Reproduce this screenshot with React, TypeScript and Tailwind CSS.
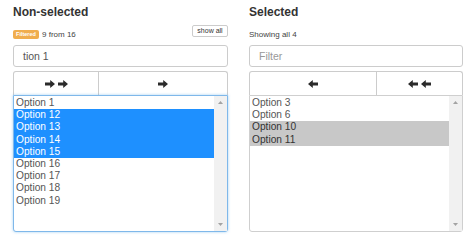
import React from "react";

const font = { fontFamily: '"Liberation Sans", Arial, Helvetica, sans-serif' };

function Arrow({ left = false }: { left?: boolean }) {
  return (
    <svg width="10" height="8" viewBox="0 0 10 8" className={left ? "-scale-x-100" : ""}>
      <path d="M0 2.6h5.2V0L10 4 5.2 8V5.4H0z" fill="#2b2b2b" />
    </svg>
  );
}

function Scrollbar() {
  return (
    <div className="w-[13px] bg-[#f1f1f1] flex flex-col justify-between items-center py-[5px]">
      <svg width="5" height="3" viewBox="0 0 5 3"><path d="M0 3L2.5 0 5 3z" fill="#a3a3a3" /></svg>
      <svg width="5" height="3" viewBox="0 0 5 3"><path d="M0 0h5L2.5 3z" fill="#a3a3a3" /></svg>
    </div>
  );
}

type Opt = { label: string; sel: boolean };

function List({ opts, focused, selBg, selText }: { opts: Opt[]; focused: boolean; selBg: string; selText: string }) {
  return (
    <div
      className={
        "h-[137px] flex rounded-b-[3px] bg-white border " +
        (focused ? "border-[#7fb8ea] shadow-[0_0_3px_rgba(102,175,233,0.6)]" : "border-[#cfcfcf]")
      }
    >
      <div className="flex-1 pt-[1px] flex flex-col">
        {opts.map((o) => (
          <div
            key={o.label}
            className={"h-[12.2px] leading-[12px] text-[10.2px] pl-[2px] " + (o.sel ? selBg + " " + selText : "text-[#555]")}
          >
            {o.label}
          </div>
        ))}
      </div>
      <Scrollbar />
    </div>
  );
}

export default function App() {
  const left: Opt[] = [
    { label: "Option 1", sel: false },
    { label: "Option 12", sel: true },
    { label: "Option 13", sel: true },
    { label: "Option 14", sel: true },
    { label: "Option 15", sel: true },
    { label: "Option 16", sel: false },
    { label: "Option 17", sel: false },
    { label: "Option 18", sel: false },
    { label: "Option 19", sel: false },
  ];
  const right: Opt[] = [
    { label: "Option 3", sel: false },
    { label: "Option 6", sel: false },
    { label: "Option 10", sel: true },
    { label: "Option 11", sel: true },
  ];
  return (
    <div style={font} className="w-[474px] h-[237px] bg-white flex gap-[21px] pl-[13px] pt-[5px] text-[#333]">
      <div className="w-[215px] flex flex-col">
        <div className="text-[12px] font-bold leading-[14px]">Non-selected</div>
        <div className="mt-[5px] h-[14px] flex justify-between items-start">
          <div className="flex items-center mt-[6px] gap-[3px]">
            <span className="bg-[#f0ad4e] text-white text-[5.5px] font-bold h-[9px] w-[26px] leading-[9px] rounded-[2px] text-center">
              Filtered
            </span>
            <span className="text-[8px] leading-[9px] text-[#444]">9 from 16</span>
          </div>
          <div className="mt-[1px] h-[12px] w-[36px] border border-[#ccc] rounded-[2px] text-[7px] leading-[10px] text-center text-[#333]">
            show all
          </div>
        </div>
        <div className="mt-[7px] h-[22px] border border-[#ccc] rounded-[3px] pl-[9px] text-[10.5px] leading-[20px] text-[#555]">
          tion 1
        </div>
        <div className="mt-[4px] h-[24px] flex border border-b-0 border-[#ccc] rounded-t-[3px]">
          <div className="w-[40%] flex items-center justify-center gap-[3px] border-r border-[#ccc]">
            <Arrow />
            <Arrow />
          </div>
          <div className="flex-1 flex items-center justify-center">
            <Arrow />
          </div>
        </div>
        <List opts={left} focused selBg="bg-[#1e90ff]" selText="text-white" />
      </div>
      <div className="w-[214px] flex flex-col">
        <div className="text-[12px] font-bold leading-[14px]">Selected</div>
        <div className="mt-[5px] h-[14px] flex items-start">
          <span className="mt-[6px] text-[8px] leading-[9px] text-[#444]">Showing all 4</span>
        </div>
        <div className="mt-[7px] h-[22px] border border-[#ccc] rounded-[3px] pl-[9px] text-[10.5px] leading-[20px] text-[#999]">
          Filter
        </div>
        <div className="mt-[4px] h-[24px] flex border border-b-0 border-[#ccc] rounded-t-[3px]">
          <div className="w-[60%] flex items-center justify-center border-r border-[#ccc]">
            <Arrow left />
          </div>
          <div className="flex-1 flex items-center justify-center gap-[3px]">
            <Arrow left />
            <Arrow left />
          </div>
        </div>
        <List opts={right} focused={false} selBg="bg-[#c8c8c8]" selText="text-[#333]" />
      </div>
    </div>
  );
}
